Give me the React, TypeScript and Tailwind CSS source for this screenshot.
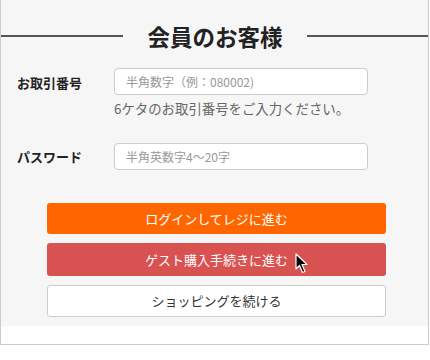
import React from 'react';

export default function App() {
  return (
    <div className="w-[430px] h-[360px] bg-white" style={{ fontFamily: '"Noto Sans CJK JP", "Noto Sans", sans-serif' }}>
      <div className="w-[429px] h-[345px] border border-t-0 border-[#cccccc] bg-white">
        <div className="bg-[#f6f6f6] h-[326px] pt-[22px]">
          {/* 見出し */}
          <div className="flex items-center">
            <div className="h-[2px] w-[122px] bg-[#555555]" />
            <h2 className="flex-1 text-center text-[22.5px] font-bold text-[#222222] leading-[28px]">会員のお客様</h2>
            <div className="h-[2px] w-[121px] bg-[#555555]" />
          </div>

          {/* お取引番号 */}
          <div className="mt-[18px] flex">
            <label className="w-[113px] pl-[16px] pt-[5px] text-[13px] font-bold text-[#222222]">お取引番号</label>
            <div>
              <input
                className="w-[254px] h-[27px] rounded-[4px] border border-[#cccccc] bg-white px-[11px] text-[12px] placeholder:text-[#999999] outline-none"
                placeholder="半角数字（例：080002)"
              />
              <p className="mt-[3px] text-[13.4px] text-[#666666] leading-[20px]">6ケタのお取引番号をご入力ください。</p>
            </div>
          </div>

          {/* パスワード */}
          <div className="mt-[25px] flex items-center">
            <label className="w-[113px] pl-[16px] text-[13px] font-bold text-[#222222]">パスワード</label>
            <input
              className="w-[254px] h-[27px] rounded-[4px] border border-[#cccccc] bg-white px-[11px] text-[12px] placeholder:text-[#999999] outline-none"
              placeholder="半角英数字4～20字"
            />
          </div>

          {/* ボタン */}
          <div className="mt-[33px] ml-[46px] w-[339px] flex flex-col gap-[9px]">
            <button className="h-[31px] rounded-[3px] bg-[#ff6600] text-white text-[13px]">ログインしてレジに進む</button>
            <div className="relative">
              <button className="w-full h-[33px] rounded-[3px] bg-[#d95252] text-white text-[13px]">ゲスト購入手続きに進む</button>
              <svg className="absolute left-[248px] top-[10px]" width="14" height="22" viewBox="0 0 14 22">
                <path d="M1 1 L1 16 L4.5 12.5 L7.5 19.5 L10 18.5 L7 11.5 L12 11.5 Z" fill="#000" stroke="#fff" strokeWidth="1.2" strokeLinejoin="round" />
              </svg>
            </div>
            <button className="h-[32px] rounded-[3px] border border-[#cccccc] bg-white text-[#333333] text-[13px]">ショッピングを続ける</button>
          </div>
        </div>
      </div>
    </div>
  );
}
